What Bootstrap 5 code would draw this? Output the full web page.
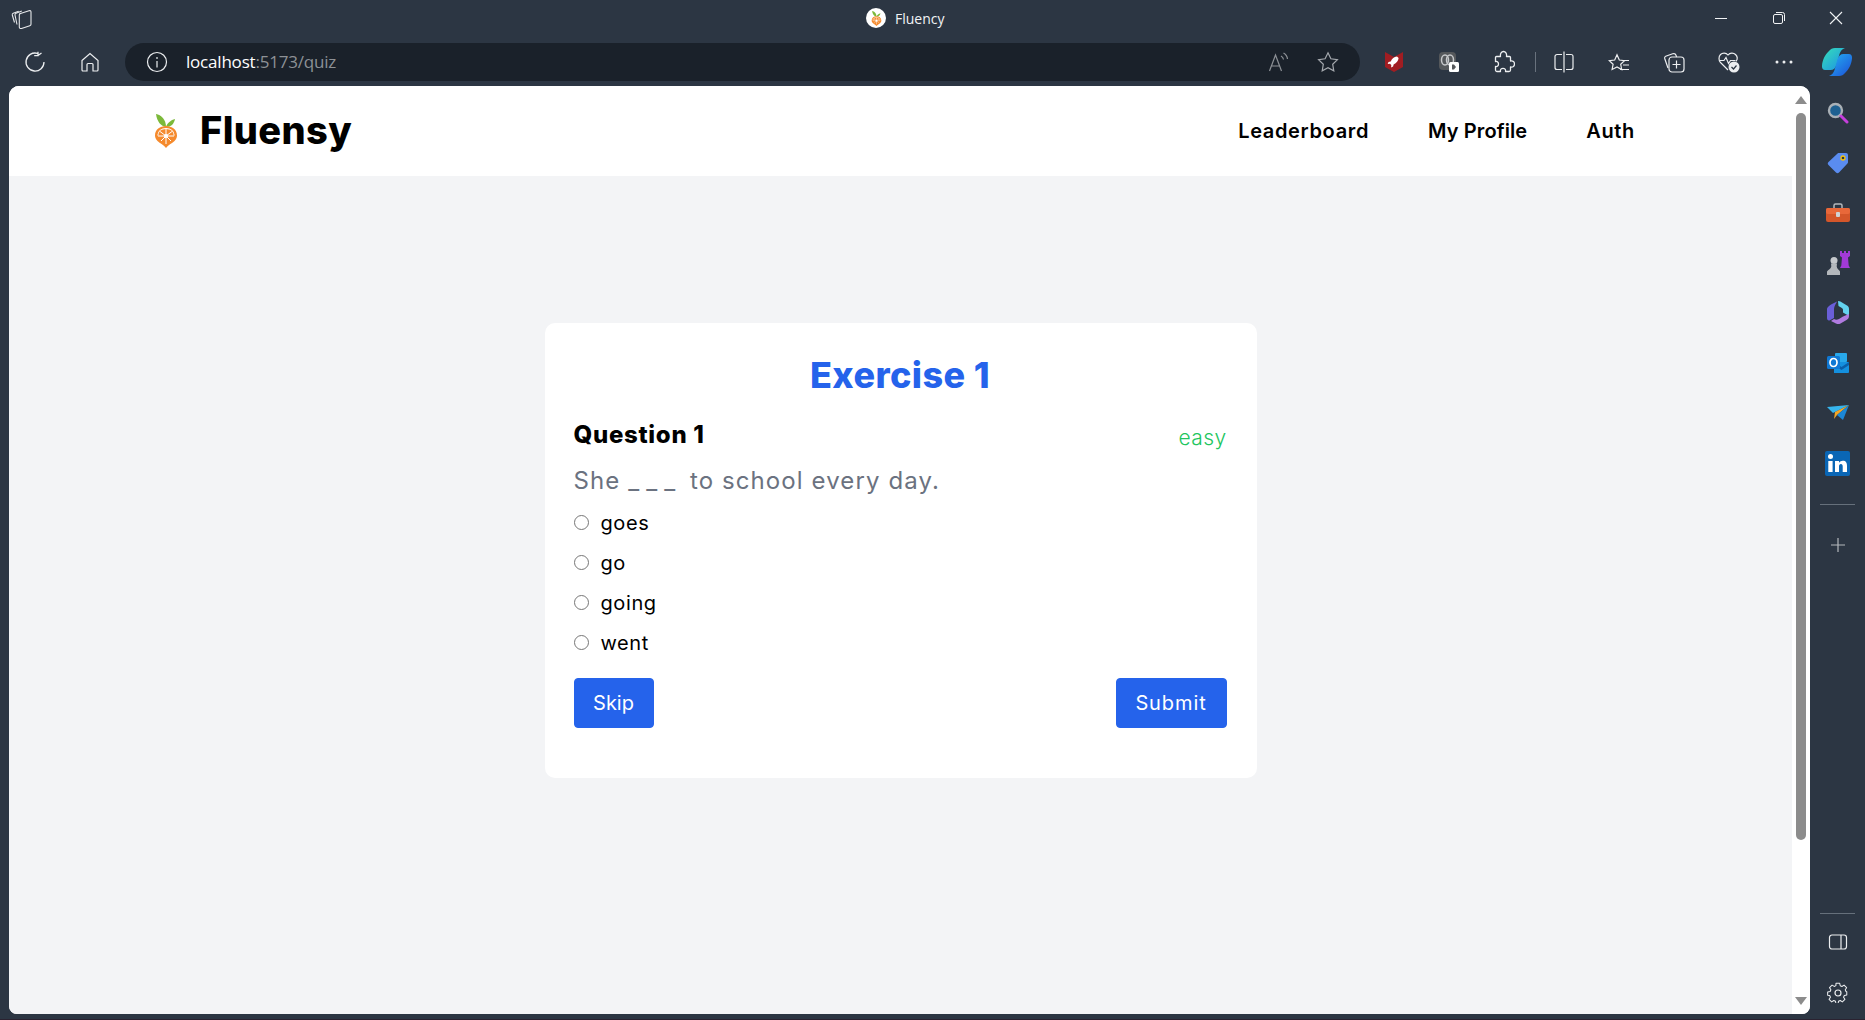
<!DOCTYPE html>
<html lang="en">

<head>
  <meta charset="utf-8">
  <meta name="viewport" content="width=device-width, initial-scale=1.0">
  <title>Fluency</title>
  <link href="https://cdn.jsdelivr.net/npm/bootstrap@5.3.3/dist/css/bootstrap.min.css" rel="stylesheet">
  <style>
    html, body {
      height: 1020px;
      overflow: hidden;
    }

    body {
      background-color: #2c3643;
      font-family: "Inter", "Liberation Sans", sans-serif;
    }

    /* browser chrome */
    .title-row {
      height: 36px;
      padding-left: 11px;
    }

    .title-center {
      flex: 1;
      color: #f1f3f5;
      font-family: "Open Sans", sans-serif;
      font-size: 14px;
      gap: 9px;
      padding-left: 833px;
    }

    .fav-circle {
      width: 20px;
      height: 20px;
      border-radius: 50%;
      background: #fff;
    }

    .win-btn {
      width: 57.5px;
      height: 36px;
    }

    .tool-row {
      height: 38px;
      margin-top: 7px;
      padding-left: 7.5px;
    }

    .tool-slot {
      width: 55px;
      height: 38px;
      flex: none;
    }

    .address-bar {
      width: 1235px;
      height: 38px;
      margin-left: 7.5px;
      margin-right: 6.5px;
      border-radius: 19px;
      background: #1a212a;
      flex: none;
      padding-left: 21px;
      padding-right: 8px;
    }

    .address-text {
      font-family: "Open Sans", sans-serif;
      font-size: 17px;
      letter-spacing: -0.2px;
      color: #8d9196;
      margin-left: 18px;
      flex: 1;
    }

    .address-text b {
      font-weight: 400;
      color: #fff;
    }

    .address-slot {
      width: 49px;
      height: 38px;
    }

    .tool-sep {
      width: 1px;
      height: 20px;
      background: #69727d;
      margin: 0 1px 0 3px;
    }

    .copilot-logo {
      flex: none;
      margin-left: 10px;
    }

    .work-row {
      height: 933px;
      margin-top: 5px;
      padding-left: 9px;
    }

    .bottom-edge {
      height: 1px;
      background: #2a2230;
    }

    /* page area */
    .page-frame {
      width: 1801px;
      height: 928px;
      border-radius: 10px 10px 8px 8px;
      background: #fff;
      overflow: hidden;
      flex: none;
    }

    .page-col {
      width: 1783px;
      background: #f3f4f6;
    }

    .fl-nav {
      height: 90px;
      background: #fff;
      padding: 0 157px 0 146px;
    }

    .fl-brand {
      color: #000;
      font-size: 38px;
      font-weight: 800;
      letter-spacing: 0.4px;
      padding: 0;
      margin: 0;
      gap: 23px;
    }

    .fl-brand span {
      padding-bottom: 2px;
    }

    .fl-links {
      gap: 59px;
    }

    .fl-links .nav-link {
      color: #000;
      font-size: 20px;
      font-weight: 600;
      letter-spacing: 0.65px;
      padding: 0;
    }

    .fl-links .nav-item:nth-child(2) .nav-link {
      letter-spacing: 0.1px;
    }

    .quiz-wrap {
      padding-top: 147px;
    }

    .quiz-card {
      width: 712px;
      border: 0;
      border-radius: 10px;
      padding: 30px 30px 50px 29px;
      background: #fff;
    }

    .quiz-title {
      color: #2563eb;
      font-size: 36px;
      font-weight: 800;
      line-height: 44px;
      letter-spacing: 0.4px;
      margin: 0 0 22px;
    }

    .q-head {
      height: 32px;
    }

    .q-name {
      font-size: 24px;
      font-weight: 800;
      line-height: 32px;
      letter-spacing: 0.7px;
      color: #000;
      margin: 0;
    }

    .q-level {
      color: #22c55e;
      font-size: 21px;
      font-weight: 300;
      line-height: 32px;
      padding-top: 3px;
      letter-spacing: 0.4px;
    }

    .q-text {
      color: #6b7280;
      font-size: 24px;
      font-weight: 400;
      line-height: 32px;
      letter-spacing: 1.1px;
      margin: 14px 0 6px;
    }

    .q-blank {
      letter-spacing: 7px;
    }

    .q-option {
      height: 40px;
      padding: 0;
      margin: 0;
      gap: 12px;
    }

    .q-option .form-check-input {
      width: 15px;
      height: 15px;
      margin: 0 0 2px;
      border: 1px solid #767676;
      float: none;
    }

    .q-option .form-check-label {
      font-size: 20px;
      color: #000;
      letter-spacing: 0.6px;
    }

    .q-actions {
      margin-top: 15px;
    }

    .q-btn {
      height: 50px;
      padding: 0;
      font-size: 20px;
      font-weight: 400;
      border-radius: 4px;
      background: #2563eb;
      border-color: #2563eb;
    }

    .q-skip {
      width: 80px;
    }

    .q-submit {
      width: 111px;
      letter-spacing: 0.9px;
    }

    /* fake scrollbar */
    .scroll-col {
      width: 18px;
      background: #fff;
      padding: 10px 4px 9px 4px;
    }

    .scroll-thumb {
      width: 10.5px;
      height: 727px;
      margin-top: 9px;
      border-radius: 5px;
      background: #8c8c8c;
    }

    /* side panel */
    .side-col {
      width: 55px;
      flex: none;
      padding: 2px 0 2px;
    }

    .side-slot {
      width: 55px;
      height: 50px;
      flex: none;
    }

    .side-sep {
      width: 35px;
      height: 1px;
      background: #66707b;
      flex: none;
    }

    .side-sep-low {
      margin-bottom: 3px;
    }

    .side-plus {
      margin-top: 15px;
    }
  </style>
</head>

<body>
  <svg width="0" height="0" class="d-block">
    <defs>
      <symbol id="fruit" viewBox="0 0 22 34">
        <path d="M11 13C6 12 2 8 1 0c5 1 10 5 10 13z" fill="#7cb93a" />
        <path d="M11 13c1-4 5-7 9-8-1 5-4 8-9 8z" fill="#7cb93a" />
        <path d="M11 34C9 31 5 29.500 2.500 27 .5 25 0 23 0 21.500 0 15.500 5 12 11 12s11 3.500 11 9.500c0 1.500-.5 3.500-2.500 5.500-2.500 2.500-6.500 4-8.500 7z" fill="#f58a2d" />
        <path d="M2.800 21.500C3 17 6.500 14.500 11 14.500s8 2.500 8.200 7" fill="none" stroke="#fff" stroke-width="1.100" />
        <g stroke="#fff" stroke-width="1">
          <path d="M11 22v-7M11 22l-6-4.500M11 22l6-4.500M11 22H3M11 22h8M11 22l-5 5M11 22l5 5M11 22v8" />
        </g>
        <circle cx="11" cy="22" r="2" fill="#fff" />
      </symbol>
    </defs>
  </svg>

  <div class="title-row d-flex align-items-center">
    <svg width="22" height="22" viewBox="0 0 22 22" fill="none" stroke="#e6e8ea" stroke-width="1.100">
      <path d="M3.500 15.500 1.300 8c-.2-.8.100-1.400.9-1.700l5.500-2" />
      <path d="M6 17.500 4 8c-.2-.8.200-1.400 1-1.700l5.800-2.300" />
      <path d="M8.300 8c0-.9.500-1.400 1.200-1.600l8.500-2.700c1.200-.3 2-.1 2 1.300v12.300c0 .9-.5 1.300-1.200 1.500l-8.300 2.700c-1.200.3-2.200-.2-2.200-1.500z" />
    </svg>
    <div class="title-center d-flex align-items-center">
      <span class="fav-circle d-flex align-items-center justify-content-center">
        <svg width="11" height="15">
          <use href="#fruit" />
        </svg>
      </span>
      <span>Fluency</span>
    </div>
    <div class="d-flex">
      <div class="win-btn d-flex align-items-center justify-content-center">
        <svg width="14" height="14" viewBox="0 0 14 14" stroke="#f1f3f5">
          <path d="M1 7.500h12" />
        </svg>
      </div>
      <div class="win-btn d-flex align-items-center justify-content-center">
        <svg width="14" height="14" viewBox="0 0 14 14" stroke="#f1f3f5" fill="none">
          <rect x="1.500" y="3.500" width="9" height="9" rx="1.500" />
          <path d="M4 1.500h6.500a2 2 0 0 1 2 2V10" />
        </svg>
      </div>
      <div class="win-btn d-flex align-items-center justify-content-center">
        <svg width="14" height="14" viewBox="0 0 14 14" stroke="#f1f3f5" stroke-width="1.100">
          <path d="M1 1l12 12M13 1 1 13" />
        </svg>
      </div>
    </div>
  </div>

  <div class="tool-row d-flex align-items-center">
    <div class="tool-slot d-flex align-items-center justify-content-center">
      <svg width="22" height="22" viewBox="0 0 22 22" fill="none" stroke="#eceef0" stroke-width="1.300">
        <path d="M13.500 2.400A9 9 0 1 0 20 11M14 .8v3.800h-3.800M14 4.600 17.500 2" />
      </svg>
    </div>
    <div class="tool-slot d-flex align-items-center justify-content-center">
      <svg width="20" height="20" viewBox="0 0 20 20" fill="none" stroke="#eceef0" stroke-width="1.200">
        <path d="M2 8.500 10 1.500l8 7V18a1 1 0 0 1-1 1h-4v-6.500a1 1 0 0 0-1-1H8a1 1 0 0 0-1 1V19H3a1 1 0 0 1-1-1z" />
      </svg>
    </div>
    <div class="address-bar d-flex align-items-center">
      <svg width="22" height="22" viewBox="0 0 22 22" fill="none" stroke="#eceef0" stroke-width="1.200">
        <circle cx="11" cy="11" r="9.500" />
        <path d="M11 10v6.500M11 6v2" />
      </svg>
      <div class="address-text"><b>localhost</b>:5173/quiz</div>
      <div class="address-slot d-flex align-items-center justify-content-center">
        <svg width="22" height="22" viewBox="0 0 22 22" fill="none" stroke="#8d9196" stroke-width="1.200">
          <path d="M1.500 20 7.500 4l6 16M3.500 15h8M13 5c1.500.8 2.300 2 2.500 3.500M15.500 2c2.500 1.500 3.800 3.500 4 6" />
        </svg>
      </div>
      <div class="address-slot d-flex align-items-center justify-content-center">
        <svg width="22" height="22" viewBox="0 0 22 22" fill="none" stroke="#a5a9ae" stroke-width="1.200">
          <path d="m11 1.800 2.900 6 6.500.9-4.700 4.600 1.100 6.500-5.800-3.100-5.800 3.100 1.100-6.500L1.600 8.700l6.500-.9z" />
        </svg>
      </div>
    </div>
    <div class="tool-slot d-flex align-items-center justify-content-center">
      <svg width="18" height="20" viewBox="0 0 18 20">
        <path d="M0 0l4.500 2.500L9 5l4.500-2.500L18 0v15l-9 5-9-5z" fill="#a11d22" />
        <path d="M13 5.500c-3 .3-5 2-6.300 5l-2.200.5L3.700 13l2.300-.2 1.300 1.300-.2 2.300 2-.8.500-2.200c3-1.300 4.700-3.300 5-6.300z" fill="#fff" transform="translate(-1 -1)" />
      </svg>
    </div>
    <div class="tool-slot d-flex align-items-center justify-content-center">
      <svg width="20" height="20" viewBox="0 0 20 20">
        <rect x="0" y="0" width="17" height="18" rx="4" fill="#55585b" />
        <ellipse cx="6" cy="8" rx="3.500" ry="5" fill="none" stroke="#c7c9cb" stroke-width="1.500" />
        <ellipse cx="11" cy="8" rx="3.500" ry="5" fill="none" stroke="#c7c9cb" stroke-width="1.500" />
        <rect x="10" y="10" width="10" height="10" rx="1.500" fill="#fff" />
        <path d="M13 12.500h2l2 2.500-2 2.500h-2z" fill="#55585b" />
      </svg>
    </div>
    <div class="tool-slot d-flex align-items-center justify-content-center">
      <svg width="22" height="24" viewBox="0 0 22 24" fill="none" stroke="#eceef0" stroke-width="1.300" stroke-linejoin="round">
        <path d="M3.500 6.500h4C7 3.500 8.500 1.500 10.500 1.500s3.500 2 3 5h3a1 1 0 0 1 1 1v3.500c2.500-.5 4 1 4 3s-1.500 3.500-4 3v3a1.500 1.500 0 0 1-1.500 1.500h-3.500c.5-2-.8-3.200-2.500-3.200s-3 1.200-2.500 3.200H4a1.500 1.500 0 0 1-1.500-1.500v-3.500c1.800.5 3-.8 3-2.500s-1.200-3-3-2.500V7.500a1 1 0 0 1 1-1z" />
      </svg>
    </div>
    <div class="tool-sep"></div>
    <div class="tool-slot d-flex align-items-center justify-content-center">
      <svg width="20" height="22" viewBox="0 0 20 22" fill="none" stroke="#eceef0" stroke-width="1.200">
        <path d="M8 3.500H3a2 2 0 0 0-2 2v11a2 2 0 0 0 2 2h5M12 3.500h5a2 2 0 0 1 2 2v11a2 2 0 0 1-2 2h-5M10 .5v21" />
      </svg>
    </div>
    <div class="tool-slot d-flex align-items-center justify-content-center">
      <svg width="22" height="22" viewBox="0 0 22 22" fill="none" stroke="#eceef0" stroke-width="1.200">
        <path d="M9 1.800 11.300 7l5.200.6-3.800 3.700 1 5.200L9 13.900 4.100 16.500l1-5.200L1.300 7.600 6.700 7zM14 7.500h7M15 12h6M12 16.500h9" transform="translate(0 2)" />
      </svg>
    </div>
    <div class="tool-slot d-flex align-items-center justify-content-center">
      <svg width="22" height="24" viewBox="0 0 22 24" fill="none" stroke="#eceef0" stroke-width="1.200">
        <path d="M5 18 1.700 8.500c-.3-1 .1-1.800 1-2.200l7-2.500c1.500-.5 2.800 0 3.300 1.500l.6 1.700" />
        <rect x="6" y="7" width="15" height="15" rx="3" />
        <path d="M13.500 10.500v8M9.500 14.500h8" />
      </svg>
    </div>
    <div class="tool-slot d-flex align-items-center justify-content-center">
      <svg width="22" height="22" viewBox="0 0 22 22" fill="none" stroke="#eceef0" stroke-width="1.200">
        <path d="M10 19 2.500 11.500C.5 9.500.5 5.500 2.500 3.500s5.500-2 7.500.5c2-2.500 5.500-2.500 7.500-.5s2 5 .5 7" />
        <path d="M1.500 9.500H6l2-3 2.500 6 2-3h5" />
        <circle cx="16" cy="16" r="5.500" fill="#eceef0" stroke="none" />
        <path d="m13.500 16 2 2 3-3.500" stroke="#2c3643" />
      </svg>
    </div>
    <div class="tool-slot d-flex align-items-center justify-content-center">
      <svg width="18" height="6" viewBox="0 0 18 6" fill="#eceef0">
        <circle cx="2" cy="3" r="1.500" />
        <circle cx="9" cy="3" r="1.500" />
        <circle cx="16" cy="3" r="1.500" />
      </svg>
    </div>
    <svg width="30" height="28" viewBox="0 0 30 28" class="copilot-logo">
      <defs>
        <linearGradient id="copA" x1="0" y1="0" x2="1" y2="1">
          <stop offset="0" stop-color="#36e0b8" />
          <stop offset="1" stop-color="#1c8fe6" />
        </linearGradient>
        <linearGradient id="copB" x1="0" y1="0" x2="1" y2="1">
          <stop offset="0" stop-color="#24b4f2" />
          <stop offset="1" stop-color="#1d4fd8" />
        </linearGradient>
      </defs>
      <path d="M7 3C8.500 1 10.500 0 13 0h10c-3 1-4.500 3-5.500 6l-3 11c-1 3-3 5-6 5H3c-2 0-3.300-1.500-3-4.500C.5 12 3 6.500 7 3z" fill="url(#copA)" />
      <path d="M23 25c-1.500 2-3.500 3-6 3H7c3-1 4.500-3 5.500-6l3-11c1-3 3-5 6-5H27c2 0 3.300 1.500 3 4.500C29.500 16 27 21.500 23 25z" fill="url(#copB)" />
    </svg>
  </div>

  <div class="work-row d-flex">
    <div class="page-frame d-flex">
      <div class="page-col d-flex flex-column">
        <nav class="navbar fl-nav flex-nowrap justify-content-between">
          <a class="navbar-brand fl-brand d-flex align-items-center" href="#">
            <svg width="22" height="34">
              <use href="#fruit" />
            </svg>
            <span>Fluensy</span>
          </a>
          <ul class="nav fl-links">
            <li class="nav-item"><a class="nav-link" href="#">Leaderboard</a></li>
            <li class="nav-item"><a class="nav-link" href="#">My Profile</a></li>
            <li class="nav-item"><a class="nav-link" href="#">Auth</a></li>
          </ul>
        </nav>
        <main class="quiz-wrap d-flex justify-content-center">
          <div class="card quiz-card">
            <h1 class="quiz-title text-center">Exercise 1</h1>
            <div class="q-head d-flex justify-content-between">
              <h2 class="q-name">Question 1</h2>
              <span class="q-level">easy</span>
            </div>
            <p class="q-text">She <span class="q-blank">___</span> to school every day.</p>
            <div class="form-check q-option d-flex align-items-center">
              <input class="form-check-input" type="radio" name="answer" id="opt1">
              <label class="form-check-label" for="opt1">goes</label>
            </div>
            <div class="form-check q-option d-flex align-items-center">
              <input class="form-check-input" type="radio" name="answer" id="opt2">
              <label class="form-check-label" for="opt2">go</label>
            </div>
            <div class="form-check q-option d-flex align-items-center">
              <input class="form-check-input" type="radio" name="answer" id="opt3">
              <label class="form-check-label" for="opt3">going</label>
            </div>
            <div class="form-check q-option d-flex align-items-center">
              <input class="form-check-input" type="radio" name="answer" id="opt4">
              <label class="form-check-label" for="opt4">went</label>
            </div>
            <div class="q-actions d-flex justify-content-between">
              <button class="btn btn-primary q-btn q-skip" type="button">Skip</button>
              <button class="btn btn-primary q-btn q-submit" type="button">Submit</button>
            </div>
          </div>
        </main>
      </div>
      <div class="scroll-col d-flex flex-column align-items-center">
        <svg width="12" height="8" viewBox="0 0 12 8" fill="#8c8c8c" class="flex-shrink-0">
          <path d="M6 0l6 8H0z" />
        </svg>
        <div class="scroll-thumb"></div>
        <svg width="12" height="8" viewBox="0 0 12 8" fill="#8c8c8c" class="flex-shrink-0 mt-auto">
          <path d="M0 0h12L6 8z" />
        </svg>
      </div>
    </div>

    <div class="side-col d-flex flex-column align-items-center">
      <div class="side-slot d-flex align-items-center justify-content-center">
        <svg width="22" height="22" viewBox="0 0 22 22" fill="none">
          <circle cx="8.500" cy="8.500" r="6.500" fill="#1e6091" stroke="#a9b0b6" stroke-width="2.400" />
          <path d="m14 14 6 6" stroke="#c53fdc" stroke-width="3" stroke-linecap="round" />
        </svg>
      </div>
      <div class="side-slot d-flex align-items-center justify-content-center">
        <svg width="22" height="22" viewBox="0 0 22 22">
          <path d="M12 1h7a2 2 0 0 1 2 2v7c0 1-.5 1.500-1 2l-8 8.500c-1 1-2 1-3 0l-7.500-7.500c-1-1-1-2 0-3L10 2c.5-.5 1-1 2-1z" fill="#5a8cf0" />
          <circle cx="16" cy="6" r="2" fill="#2c3643" stroke="#f4c20d" stroke-width="1.300" />
        </svg>
      </div>
      <div class="side-slot d-flex align-items-center justify-content-center">
        <svg width="24" height="20" viewBox="0 0 24 20">
          <path d="M8 5V2.500C8 1.500 8.500 1 9.500 1h5c1 0 1.500.5 1.500 1.500V5" fill="none" stroke="#b4b8bc" stroke-width="1.500" />
          <rect x="0" y="5" width="24" height="14" rx="2" fill="#d4562a" />
          <rect x="0" y="5" width="24" height="6" rx="2" fill="#e8683a" />
          <rect x="10" y="9" width="4" height="5" rx="1" fill="#cfd3d6" />
        </svg>
      </div>
      <div class="side-slot d-flex align-items-center justify-content-center">
        <svg width="24" height="24" viewBox="0 0 24 24">
          <path d="M14 0h2v2h2V0h2v2h2V0h2v5l-2 1.500.7 8 1.300 2.500H14l1.300-2.500.7-8L14 5z" fill="#a23ad6" />
          <circle cx="8" cy="9.500" r="3.500" fill="#c5c8cb" />
          <path d="M5 12.500h6l-.3 3c.2 2 2.300 3.500 3.300 5V24H1v-3.500c1.200-1.500 4-3 4.300-5z" fill="#b4b8bc" />
        </svg>
      </div>
      <div class="side-slot d-flex align-items-center justify-content-center">
        <svg width="22" height="24" viewBox="0 0 22 24">
          <path d="M11 0c2 0 3 1 4 1.500l5 3C21 5 22 6 22 8v7l-6-3.500V9c0-1-.5-1.800-1.500-2.300l-3-1.700z" fill="#63d2ee" />
          <path d="M1 6c1-1 2-2 4-3l5-2.500C9 3 7 5 7 8v9l-4.500 2.500C1 20 0 18.500 0 17V8c0-.8.300-1.500 1-2z" fill="#6a5fd8" />
          <path d="M22 15c0 2-1 3-2.500 4l-6 3.500c-1.500.8-3 .8-4.500 0L4 20l3-2c1.500 1 3 1 5 0l4-2.500 6-2.500z" fill="#b07be0" />
        </svg>
      </div>
      <div class="side-slot d-flex align-items-center justify-content-center">
        <svg width="22" height="20" viewBox="0 0 22 20">
          <rect x="8" y="0" width="12" height="9" rx="1" fill="#28a8ea" />
          <path d="M7 9h15v10a1 1 0 0 1-1 1H7z" fill="#1490df" />
          <path d="M7 9l7.500 5L22 9v3l-7.500 5L7 12z" fill="#0a5ea8" />
          <rect x="0" y="3" width="13" height="13" rx="1.500" fill="#0f78d4" />
          <ellipse cx="6.500" cy="9.500" rx="3.500" ry="4" fill="none" stroke="#fff" stroke-width="1.700" />
        </svg>
      </div>
      <div class="side-slot d-flex align-items-center justify-content-center">
        <svg width="22" height="16" viewBox="0 0 22 16">
          <path d="M0 2l22-2-14 7-2 1z" fill="#36b5ee" />
          <path d="M22 0 8 7l-1 7 3-4z" fill="#f5a623" />
          <path d="M22 0 10 10l6 5z" fill="#1b87d6" />
        </svg>
      </div>
      <div class="side-slot d-flex align-items-center justify-content-center">
        <svg width="25" height="25" viewBox="0 0 25 25">
          <rect width="25" height="25" rx="2" fill="#0a66b5" />
          <circle cx="5.500" cy="5.500" r="2.500" fill="#fff" />
          <path d="M3.300 10h4.300v11H3.300zM10 10h4v1.700c.8-1.300 2.200-2 3.800-2 3.200 0 4.200 2.100 4.200 5V21h-4.300v-5.600c0-1.500-.5-2.400-1.800-2.400-1.400 0-1.900 1-1.900 2.400V21H10z" fill="#fff" />
        </svg>
      </div>
      <div class="side-sep mt-3"></div>
      <div class="side-slot side-plus d-flex align-items-center justify-content-center">
        <svg width="16" height="16" viewBox="0 0 16 16" stroke="#b4b8bc" stroke-width="1.200">
          <path d="M8 1v14M1 8h14" />
        </svg>
      </div>
      <div class="side-sep side-sep-low mt-auto"></div>
      <div class="side-slot d-flex align-items-center justify-content-center">
        <svg width="20" height="18" viewBox="0 0 20 18" fill="none" stroke="#eceef0" stroke-width="1.200">
          <rect x="1.500" y="2" width="17" height="14" rx="2.500" />
          <path d="M13 2v14" />
        </svg>
      </div>
      <div class="side-slot d-flex align-items-center justify-content-center">
        <svg width="22" height="22" viewBox="0 0 22 22" fill="none" stroke="#eceef0" stroke-width="1.200" stroke-linejoin="round">
          <path d="M8.800 1.500h4.400l.6 2.900 2 .9 2.500-1.600 3 3-1.600 2.500.9 2 .9.300v3.800l-2.900.6-.9 2 1.600 2.500-3 3-2.500-1.600-2 .9-.6 2.900H8.800l-.6-2.900-2-.9-2.500 1.600-3-3 1.600-2.500-.9-2L-1 15.500v-3.800l2.900-.6.9-2L1.200 6.600l3-3 2.500 1.600 2-.9z" transform="translate(1.500 1) scale(.85)" />
          <circle cx="11" cy="12" r="3" />
        </svg>
      </div>
    </div>
  </div>
  <div class="bottom-edge"></div>

  <script src="https://cdn.jsdelivr.net/npm/bootstrap@5.3.3/dist/js/bootstrap.bundle.min.js"></script>
</body>

</html>
